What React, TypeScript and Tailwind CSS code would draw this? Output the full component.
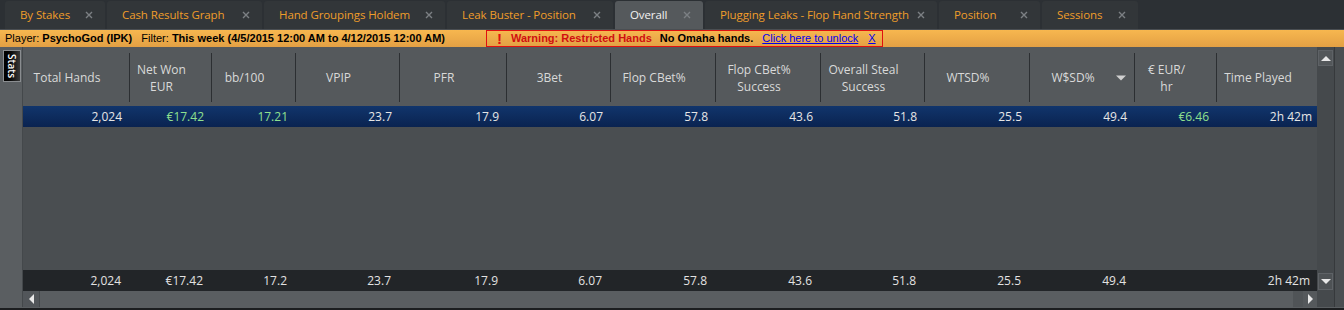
import React from 'react';

type Col = { label: string[]; sort?: boolean };

const GRID =
  'grid grid-cols-[107px_82px_84px_104px_107px_104px_105px_105px_104px_105px_105px_82px_100px]';

const tabs: { name: string; w: string }[] = [
  { name: 'By Stakes', w: 'w-[100px]' },
  { name: 'Cash Results Graph', w: 'w-[155px]' },
  { name: 'Hand Groupings Holdem', w: 'w-[181px]' },
  { name: 'Leak Buster - Position', w: 'w-[166px]' },
  { name: 'Overall', w: 'w-[88px]' },
  { name: 'Plugging Leaks - Flop Hand Strength', w: 'w-[232px]' },
  { name: 'Position', w: 'w-[101px]' },
  { name: 'Sessions', w: 'w-[96px]' },
];

const cols: Col[] = [
  { label: ['Total Hands'] },
  { label: ['Net Won', 'EUR'] },
  { label: ['bb/100'] },
  { label: ['VPIP'] },
  { label: ['PFR'] },
  { label: ['3Bet'] },
  { label: ['Flop CBet%'] },
  { label: ['Flop CBet%', 'Success'] },
  { label: ['Overall Steal', 'Success'] },
  { label: ['WTSD%'] },
  { label: ['W$SD%'], sort: true },
  { label: ['€ EUR/', 'hr'] },
  { label: ['Time Played'] },
];

// [value, green?]
const row: [string, boolean][] = [
  ['2,024', false],
  ['€17.42', true],
  ['17.21', true],
  ['23.7', false],
  ['17.9', false],
  ['6.07', false],
  ['57.8', false],
  ['43.6', false],
  ['51.8', false],
  ['25.5', false],
  ['49.4', false],
  ['€6.46', true],
  ['2h 42m', false],
];

const totals = [
  '2,024',
  '€17.42',
  '17.2',
  '23.7',
  '17.9',
  '6.07',
  '57.8',
  '43.6',
  '51.8',
  '25.5',
  '49.4',
  '',
  '2h 42m',
];

const CloseX = () => (
  <svg width="8" height="8" viewBox="0 0 8 8" className="shrink-0">
    <path d="M1 1L7 7M7 1L1 7" stroke="#7c8084" strokeWidth="1.4" />
  </svg>
);

const Tri = ({ dir, color = '#e8e8e8' }: { dir: 'up' | 'down' | 'left' | 'right'; color?: string }) => {
  const pts = {
    up: '0,6 5,1 10,6',
    down: '0,1 10,1 5,6',
    left: '6,0 6,10 1,5',
    right: '1,0 1,10 6,5',
  }[dir];
  const vertical = dir === 'up' || dir === 'down';
  return (
    <svg width={vertical ? 10 : 7} height={vertical ? 7 : 10} viewBox={vertical ? '0 0 10 7' : '0 0 7 10'}>
      <polygon points={pts} fill={color} />
    </svg>
  );
};

export default function App() {
  return (
    <div className="w-[1344px] h-[310px] bg-[#2c3034] flex flex-col overflow-hidden font-['Open_Sans',sans-serif]">
      {/* tabs */}
      <div className="h-[29px] flex items-end pl-[5px] gap-[2px]">
        {tabs.map((t) => {
          const active = t.name === 'Overall';
          return (
            <div
              key={t.name}
              className={
                t.w +
                ' h-[28px] flex items-center justify-between pl-[15px] pr-[12px] rounded-t-[3px] text-[11.5px] tracking-[-0.1px] whitespace-nowrap ' +
                (active ? 'bg-[#55595c] text-[#f2f2f2]' : 'bg-[#323639] text-[#ef9d2a]')
              }
            >
              <span>{t.name}</span>
              <CloseX />
            </div>
          );
        })}
      </div>

      {/* filter bar */}
      <div className="h-[18px] border-t border-[#4a4e52] bg-gradient-to-b from-[#f7b74f] to-[#e3a044] flex items-center pl-[5px] text-[11px] text-black font-['Liberation_Sans',sans-serif] whitespace-nowrap">
        <span>Player:&nbsp;</span>
        <span className="font-bold">PsychoGod (IPK)</span>
        <span>&nbsp;&nbsp;&nbsp;Filter:&nbsp;</span>
        <span className="font-bold">This week (4/5/2015 12:00 AM to 4/12/2015 12:00 AM)</span>
        <div className="ml-[41px] h-[17px] border border-[#e01010] flex items-center pl-[10px] pr-[6px]">
          <span className="text-[#e01010] font-bold text-[15px] leading-none">!</span>
          <span className="ml-[9px] text-[#d01010] font-bold">Warning: Restricted Hands</span>
          <span className="ml-[8px] font-bold">No Omaha hands.</span>
          <span className="ml-[9px] text-[#0000ee] underline">Click here to unlock</span>
          <span className="ml-[10px] text-[#0000ee] underline">X</span>
        </div>
      </div>

      {/* main */}
      <div className="flex-1 flex">
        {/* left strip */}
        <div className="w-[23px] bg-[#5a5e61] border-r border-[#44484b] pt-[3px] pl-[3px]">
          <div className="w-[18px] h-[32px] border border-[#8a8d90] bg-gradient-to-r from-[#000000] to-[#3a3a3a] flex items-center justify-center">
            <span className="[writing-mode:vertical-rl] text-white text-[10px] font-semibold leading-none">
              Stats
            </span>
          </div>
        </div>

        {/* grid */}
        <div className="w-[1294px] flex flex-col text-[12px]">
          <div className={GRID + ' h-[59px] bg-[#55595c] text-[#d9d9d9]'}>
            {cols.map((c, i) => (
              <div key={i} className="flex pt-[6px] pb-[4px]">
                <div
                  className={
                    'relative flex-1 flex flex-col items-center justify-center pr-[18px] text-center leading-[17px] ' +
                    (i < cols.length - 1 ? 'border-r border-[#2c2f32]' : '')
                  }
                >
                  {c.label.map((l) => (
                    <span key={l}>{l}</span>
                  ))}
                  {c.sort && (
                    <span className="absolute right-[8px] top-1/2 -translate-y-1/2 flex">
                      <Tri dir="down" color="#d0d0d0" />
                    </span>
                  )}
                </div>
              </div>
            ))}
          </div>

          <div className={GRID + ' h-[21px] bg-gradient-to-b from-[#11356c] to-[#0a2350] items-center'}>
            {row.map(([v, g], i) => (
              <div
                key={i}
                className={
                  'text-right ' +
                  (i === row.length - 1 ? 'pr-[5px] ' : 'pr-[8px] ') +
                  (g ? 'text-[#8fe08f]' : 'text-[#e6e6e6]')
                }
              >
                {v}
              </div>
            ))}
          </div>

          <div className="flex-1 bg-[#4a4e51]" />

          <div className={GRID + ' h-[21px] bg-[#222528] items-center text-[#e2e2e2]'}>
            {totals.map((v, i) => (
              <div key={i} className={'text-right ' + (i === totals.length - 1 ? 'pr-[7px]' : 'pr-[9px]')}>
                {v}
              </div>
            ))}
          </div>

          {/* horizontal scrollbar */}
          <div className="h-[16px] flex bg-[#55595c]">
            <div className="w-[17px] flex items-center justify-center border-r border-[#44484b] bg-[#52565a]">
              <Tri dir="left" />
            </div>
            <div className="flex-1 bg-[#5a5e61]" />
            <div className="w-[10px] bg-[#505457]" />
            <div className="w-[14px] flex items-center justify-center bg-[#55595c]">
              <Tri dir="right" />
            </div>
          </div>
        </div>

        {/* vertical scrollbar */}
        <div className="w-[18px] bg-[#45494c] flex flex-col border-r border-[#36393c]">
          <div className="mt-[3px] mx-[1px] h-[16px] border border-[#5e6266] bg-[#53575a] flex items-center justify-center">
            <Tri dir="up" />
          </div>
          <div className="flex-1" />
          <div className="mb-[17px] mx-[1px] h-[17px] border border-[#5e6266] bg-[#4e5255] flex items-center justify-center">
            <Tri dir="down" />
          </div>
        </div>

        <div className="flex-1 bg-[#4a4e51]" />
      </div>

      <div className="h-[3px] bg-[#5a5e61] border-b-2 border-[#1c1e20]" />
    </div>
  );
}
